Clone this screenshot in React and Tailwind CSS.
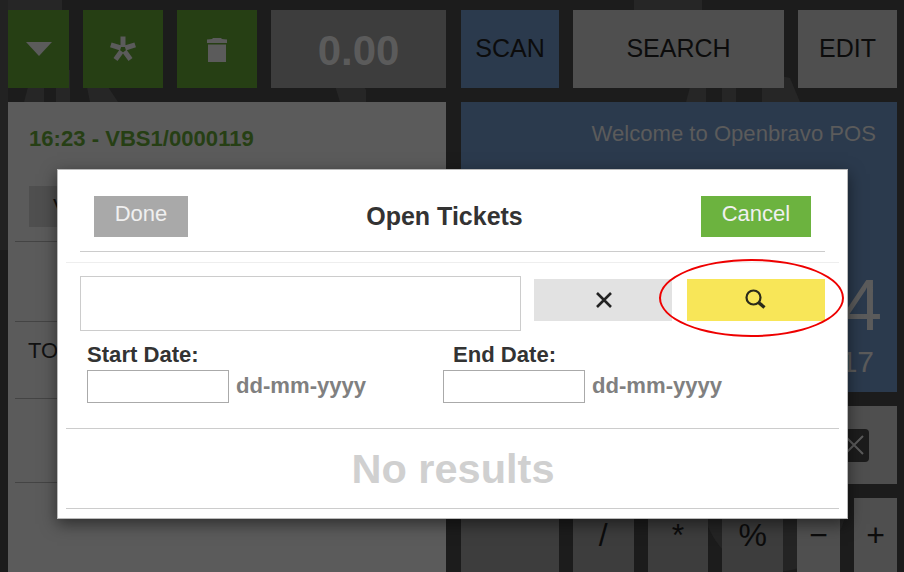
import React from 'react';

const Btn = ({ className, children }) => (
  <div className={`h-[78px] flex items-center justify-center shrink-0 ${className}`}>{children}</div>
);

const App = () => {
  return (
    <div className="relative w-[904px] h-[572px] overflow-hidden bg-[#1c1c1c] font-['Liberation_Sans',Arial,sans-serif]">
      {/* faint wallpaper drawing */}
      <svg className="absolute inset-0" width="904" height="572" fill="#262626">
        <rect x="0" y="0" width="62" height="60" />
        <rect x="634" y="0" width="68" height="60" />
        <path d="M24 102l8-30h12v30zM56 102V70h14v32zM90 102l-6-30 18 6 16 24z" />
        <path d="M686 102l8-30h12v30zM722 102V70h14v32zM762 102V72l28 6 10 24z" />
        <path d="M340 102l-8-26h10l6 12 2-12h8l8 14v12z" />
        <rect x="0" y="0" width="8" height="250" fill="#222" />
        <circle cx="775" cy="500" r="72" fill="#242424" />
      </svg>

      {/* page behind the popup */}
      <div className="relative flex gap-[15px] pl-2 pr-[7px] pt-2.5 h-full">
        <div className="w-[438px] flex flex-col gap-3.5">
          <div className="flex gap-3.5">
            <Btn className="w-[61px] bg-[#263f14]">
              <div className="w-0 h-0 border-x-[13px] border-x-transparent border-t-[14px] border-t-[#5b5b5b]" />
            </Btn>
            <Btn className="w-20 bg-[#263f14]">
              <svg width="28" height="28" viewBox="0 0 28 28" stroke="#5b5b5b" strokeWidth="5">
                <path d="M14 1.500v10.500M1.800 9.800l10 3.200M26.200 9.800l-10 3.200M6.500 24.500l6-8.300M21.500 24.500l-6-8.300" />
              </svg>
            </Btn>
            <Btn className="w-20 bg-[#263f14]">
              <svg width="22" height="26" viewBox="0 0 22 26" fill="#5b5b5b">
                <path d="M1 3.500l5-.5 1-1h8l1 1 5 .5v3.500H1zM2 8.500h18v17.500H2z" />
              </svg>
            </Btn>
            <Btn className="w-[175px] bg-[#3d3d3d] text-[#5b5b5b] text-[42px] font-bold pt-0.5">0.00</Btn>
          </div>
          <div className="flex-1 bg-[#5b5b5b] px-[21px]">
            <div className="pt-6 text-[22.1px] leading-[26px] font-bold text-[#263f14]">16:23 - VBS1/0000119</div>
            <div className="mt-[34px] w-[110px] h-[41px] bg-[#4f4f4f] px-6 text-[22px] leading-[41px] text-[#111]">VAT</div>
            <div className="-mx-3.5 mt-3.5 h-20 border-t border-[#444]" />
            <div className="-mx-3.5 h-[77px] border-t border-[#444] pl-[13px] pt-3 text-[22px] text-[#111]">TOTAL</div>
            <div className="-mx-3.5 h-[84px] border-t border-[#444]" />
            <div className="-mx-3.5 border-t border-[#444]" />
          </div>
        </div>
        <div className="w-[436px] flex flex-col gap-3.5">
          <div className="flex gap-3.5 text-[25px] text-[#0c0c0c]">
            <Btn className="w-[98px] bg-[#2b3a4d]">SCAN</Btn>
            <Btn className="w-[211px] bg-[#4f4f4f]">SEARCH</Btn>
            <Btn className="w-[99px] bg-[#4f4f4f]">EDIT</Btn>
          </div>
          <div className="h-[290px] bg-[#2b3a4d] pr-[21px] text-right text-[#5b5b5b]">
            <div className="pt-[18px] text-[22.1px] leading-[28px]">Welcome to Openbravo POS</div>
            <div className="mt-[117px] text-[72px] leading-[80px] -mr-1.5">4</div>
            <div className="text-[30px] leading-[34px] pr-0.5">17</div>
          </div>
          <div className="h-[78px] flex justify-end">
            <div className="w-[99px] bg-[#4f4f4f] flex items-center">
              <div className="ml-10 w-[31px] h-[33px] bg-[#1c1c1c] rounded-sm flex items-center justify-center">
                <svg width="20" height="20" viewBox="0 0 20 20" stroke="#5b5b5b" strokeWidth="2">
                  <path d="M1 1l18 18M19 1L1 19" />
                </svg>
              </div>
            </div>
          </div>
          <div className="flex-1 flex gap-3.5 text-[#0c0c0c] text-[32px] leading-[74px] text-center">
            <div className="w-[98px] bg-[#3d3d3d]" />
            <div className="w-[61px] bg-[#3d3d3d]">/</div>
            <div className="w-[61px] bg-[#3d3d3d]">*</div>
            <div className="w-[61px] bg-[#3d3d3d]">%</div>
            <div className="w-[43px] bg-[#4f4f4f]">−</div>
            <div className="w-[43px] bg-[#4f4f4f]">+</div>
          </div>
        </div>
      </div>

      {/* popup */}
      <div className="absolute left-[57px] top-[169px] w-[791px] h-[350px] bg-white border border-[#bbb] shadow-[0_5px_15px_rgba(0,0,0,0.5)] px-2 text-[#333]">
        <div className="mx-[14px] h-[82px] border-b border-[#ccc] pt-[26px] px-3.5 flex items-start justify-between">
          <div className="w-[94px] h-[41px] bg-[#a9a9a9] text-[#f0f0f0] text-[22px] leading-[36px] text-center">Done</div>
          <div className="text-[25px] font-bold leading-[41px]">Open Tickets</div>
          <div className="w-[110px] h-[41px] bg-[#6cb33f] text-[#f0f0f0] text-[22px] leading-[36px] text-center">Cancel</div>
        </div>
        <div className="mt-[10px] border-t border-[#eee] px-3.5 pt-[13px]">
          <div className="flex items-start">
            <div className="w-[441px] h-[55px] border border-[#ccc]" />
            <div className="mt-[3px] ml-[13px] w-[138px] h-[42px] bg-[#e2e2e2] flex items-center justify-center pl-px">
              <svg width="18" height="16" viewBox="0 0 18 16" fill="none" stroke="#222" strokeWidth="2.600">
                <path d="M2 1l14 14M16 1L2 15" />
              </svg>
            </div>
            <div className="mt-[3px] ml-[15px] w-[138px] h-[42px] bg-[#f8e658] flex items-center justify-center">
              <svg width="22" height="22" viewBox="0 0 22 22" fill="none" stroke="#2a2a1a">
                <circle cx="8.500" cy="8.500" r="7" strokeWidth="2.200" />
                <path d="M13.500 13.500l6 5" strokeWidth="3.400" />
              </svg>
            </div>
          </div>
          <div className="flex mt-[11px] text-[22.1px] font-bold leading-[25px]">
            <div className="w-[373px] pl-[7px]">Start Date:</div>
            <div>End Date:</div>
          </div>
          <div className="flex items-center h-[33px] text-[22.1px] font-bold text-[#808080] mt-[3px]">
            <div className="ml-[7px] w-[142px] h-[33px] border border-[#aaa]" />
            <div className="ml-[7px] w-[207px] pb-0.5">dd-mm-yyyy</div>
            <div className="w-[142px] h-[33px] border border-[#aaa]" />
            <div className="ml-[7px] pb-0.5">dd-mm-yyyy</div>
          </div>
        </div>
        <div className="mt-[25px] h-[81px] border-y border-[#ccc] text-center text-[#d0d0d0] text-[41.5px] font-bold leading-[80px] pl-px">No results</div>
      </div>

      {/* red marker round the search button */}
      <div className="absolute left-[659px] top-[259px] w-[185px] h-[78px] rounded-[50%] border-2 border-[#ee0000]" />
    </div>
  );
};

export default App;
